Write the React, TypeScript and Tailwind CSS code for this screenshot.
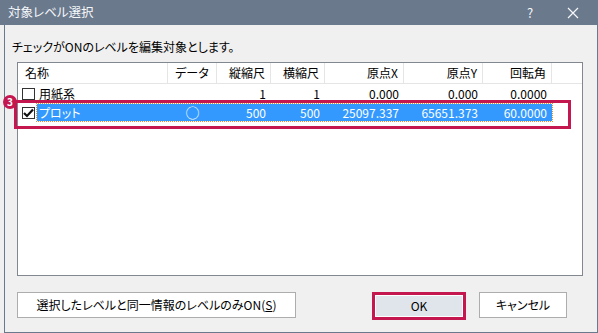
import React from 'react';

const font = "font-['Noto_Sans_CJK_JP','Noto_Sans',sans-serif] [font-feature-settings:'palt']";

const cols = [
  { label: '名称', w: 'w-[150px]', align: 'pl-[7px] text-left' },
  { label: 'データ', w: 'w-[49px]', align: 'text-center' },
  { label: '縦縮尺', w: 'w-[54px]', align: 'pr-[5px] text-right' },
  { label: '横縮尺', w: 'w-[54px]', align: 'pr-[5px] text-right' },
  { label: '原点X', w: 'w-[79px]', align: 'pr-[5px] text-right' },
  { label: '原点Y', w: 'w-[79px]', align: 'pr-[5px] text-right' },
  { label: '回転角', w: 'w-[69px]', align: 'pr-[5px] text-right' },
];

const rows = [
  { name: '用紙系', data: '', sx: '1', sy: '1', x: '0.000', y: '0.000', r: '0.0000', checked: false, selected: false },
  { name: 'プロット', data: '○', sx: '500', sy: '500', x: '25097.337', y: '65651.373', r: '60.0000', checked: true, selected: true },
];

function CheckBox({ checked }: { checked: boolean }) {
  return (
    <div className="w-[13px] h-[12px] border border-[#333333] bg-white flex items-center justify-center">
      {checked && (
        <svg width="11" height="10" viewBox="0 0 11 10">
          <path d="M1 5 L4 8 L10 1.5" fill="none" stroke="#111" strokeWidth="2.2" />
        </svg>
      )}
    </div>
  );
}

export default function App() {
  return (
    <div className={`w-[598px] h-[333px] bg-[#f0f0f0] flex flex-col text-[12px] text-black ${font}`}>
      {/* title bar */}
      <div className="h-[25px] bg-[#6a798c] flex items-center text-[#f5f7fa]">
        <span className="pl-[8px] flex-1 text-[12.5px] leading-none">対象レベル選択</span>
        <span className="w-[20px] text-center text-[13px] leading-none mr-[27px]">?</span>
        <span className="w-[12px] mr-[19px] flex items-center">
          <svg width="12" height="12" viewBox="0 0 12 12">
            <path d="M1 1 L11 11 M11 1 L1 11" stroke="#f5f7fa" strokeWidth="1.2" />
          </svg>
        </span>
      </div>

      {/* body */}
      <div className="flex-1 ml-[4px] w-[594px] border-l border-r border-b border-[#6a798c] flex flex-col">
        <div className="mt-[14px] pl-[7px] h-[16px] leading-[16px]">チェックがONのレベルを編集対象とします。</div>

        <div className="relative mt-[7px] ml-[12px] w-[566px] h-[214px] border border-[#828790] bg-white">
          {/* header */}
          <div className="flex h-[21px] border-b border-[#e5e5e5]">
            {cols.map((c) => (
              <div key={c.label} className={`${c.w} ${c.align} border-r border-[#e5e5e5] leading-[20px]`}>
                {c.label}
              </div>
            ))}
            <div className="flex-1" />
          </div>

          {/* rows */}
          {rows.map((r) => (
            <div key={r.name} className="flex h-[19px] items-center">
              <div className="pl-[4px] pr-[2px] flex items-center">
                <CheckBox checked={r.checked} />
              </div>
              <div
                className={`flex h-[17px] items-center leading-[17px] ${
                  r.selected ? 'bg-[#3399ff] text-white outline outline-1 outline-dotted outline-[#e0913e]' : ''
                }`}
              >
                <div className="w-[131px] pl-[2px]">{r.name}</div>
                <div className="w-[49px] text-center text-[14px]">{r.data}</div>
                <div className="w-[54px] pr-[5px] text-right">{r.sx}</div>
                <div className="w-[54px] pr-[5px] text-right">{r.sy}</div>
                <div className="w-[79px] pr-[5px] text-right">{r.x}</div>
                <div className="w-[79px] pr-[5px] text-right">{r.y}</div>
                <div className="w-[69px] pr-[5px] text-right">{r.r}</div>
              </div>
            </div>
          ))}

          {/* annotation */}
          <div className="absolute left-[-4px] top-[37px] w-[557px] h-[29px] border-[3px] border-[#c4174f]" />
          <div className="absolute left-[-15px] top-[32px] w-[14px] h-[14px] rounded-full bg-[#c4174f] text-white text-[10px] font-bold flex items-center justify-center leading-none">
            3
          </div>
        </div>

        {/* buttons */}
        <div className="mt-[16px] flex items-start">
          <button className="ml-[12px] w-[279px] h-[26px] bg-white border border-[#adadad] leading-none">
            選択したレベルと同一情報のレベルのみON(<span className="underline">S</span>)
          </button>
          <div className="ml-[76px] w-[94px] h-[28px] border-[3px] border-[#c4174f] p-[1px] bg-white">
            <button className="w-full h-full bg-[#e0e5ec] leading-none">OK</button>
          </div>
          <button className="ml-[13px] w-[88px] h-[26px] bg-white border border-[#adadad] leading-none">
            キャンセル
          </button>
        </div>
      </div>
    </div>
  );
}
